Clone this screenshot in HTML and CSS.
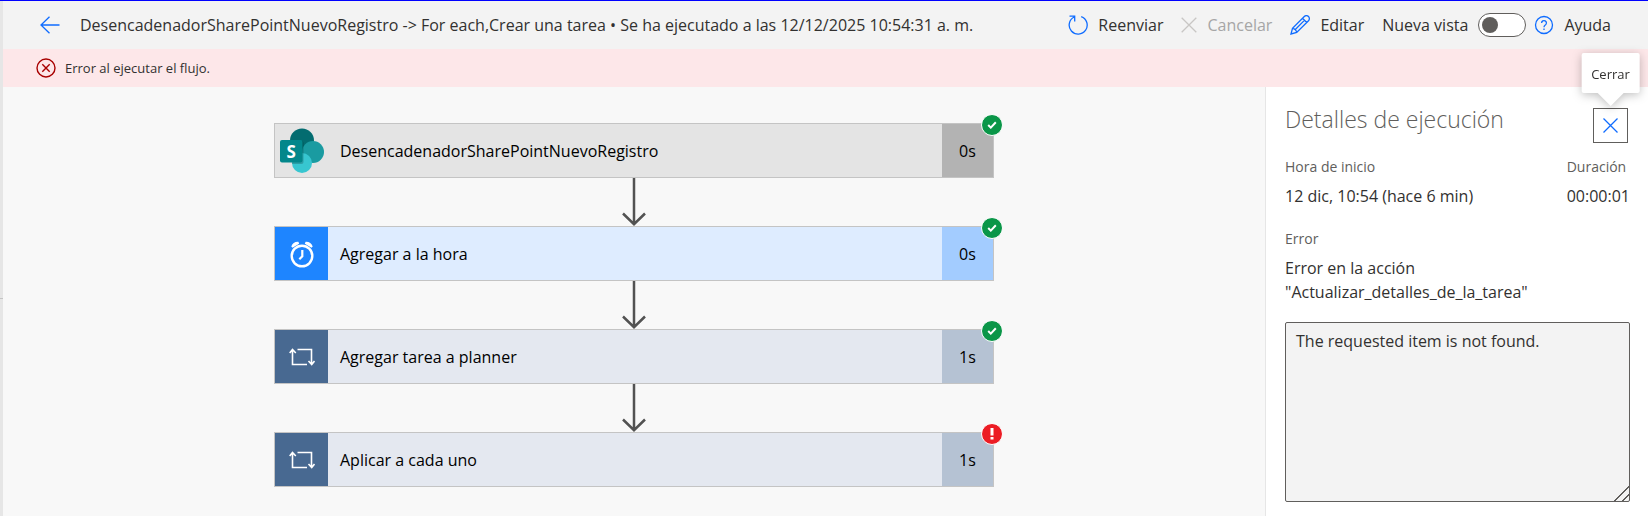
FILE: index.html
```html
<!DOCTYPE html>
<html lang="es">
<head>
    <meta charset="utf-8">
    <title>Historial de ejecución</title>
    <link rel="stylesheet" href="styles.css">
</head>
<body>
    <div class="rail"><span class="rail-mark"></span></div>

    <div class="page">
        <header class="topbar">
            <button class="icon-btn back" aria-label="Atrás">
                <svg width="20" height="18" viewBox="0 0 20 18"><path d="M19.500 9H1M9.500 .7L1 9l8.500 8.300"/></svg>
            </button>
            <h1 class="run-title">DesencadenadorSharePointNuevoRegistro -&gt; For each,Crear una tarea • Se ha ejecutado a las 12/12/2025 10:54:31 a. m.</h1>

            <div class="commands">
                <button class="command">
                    <svg width="20" height="20" viewBox="0 0 20 20"><path d="M13.200 1.600A9 9 0 1 1 6.200 2M1.500 1.200h5.200v5.300"/></svg>
                    Reenviar
                </button>
                <button class="command" disabled>
                    <svg width="16" height="16" viewBox="0 0 16 16"><path d="M.7 .7l14.600 14.600M15.300 .7L.7 15.300"/></svg>
                    Cancelar
                </button>
                <button class="command">
                    <svg width="20" height="20" viewBox="0 0 20 20"><path d="M1 19l1.500-5.700L14.300 1.500a2.900 2.900 0 0 1 4.200 4.200L6.700 17.500zM12.500 3.300l4.200 4.200M2.500 13.300c2.200.3 3.900 2 4.200 4.200M14.400 5.400L4.800 15"/></svg>
                    Editar
                </button>
                <label class="toggle">
                    Nueva vista
                    <input type="checkbox" role="switch">
                </label>
                <button class="command help">
                    <svg width="20" height="20" viewBox="0 0 20 20"><circle cx="10" cy="10" r="8.500"/><path d="M7.600 8a2.400 2.400 0 1 1 3.700 2c-.9.600-1.300 1.100-1.300 2.200M10 13.500v1.500"/></svg>
                    Ayuda
                </button>
            </div>
        </header>

        <div class="banner" role="alert">
            <svg width="20" height="20" viewBox="0 0 20 20"><circle cx="10" cy="10" r="9"/><path d="M6.300 6.300l7.400 7.400M13.700 6.300l-7.400 7.400"/></svg>
            Error al ejecutar el flujo.
        </div>

        <div class="content">
            <main class="canvas">
                <div class="card trigger">
                    <div class="card-icon">
                        <svg width="46" height="46" viewBox="0 0 46 46">
                            <circle cx="23" cy="12.500" r="12" fill="#036c70"/>
                            <circle cx="34" cy="24" r="11" fill="#1a9ba1"/>
                            <circle cx="23" cy="35" r="10" fill="#37c6d0"/>
                            <path d="M11 13h11.500a2 2 0 0 1 2 2v19a2 2 0 0 1-2 2H13z" fill="#000" opacity=".2"/>
                            <rect x="1" y="12" width="22.500" height="22.500" rx="2" fill="#03878b"/>
                            <text class="logo-letter" x="12.200" y="29.500">S</text>
                        </svg>
                    </div>
                    <div class="card-name">DesencadenadorSharePointNuevoRegistro</div>
                    <div class="card-time">0s</div>
                    <span class="badge ok"><svg width="10" height="8" viewBox="0 0 10 8"><path d="M1.200 4l2.600 2.600L8.800 1.300"/></svg></span>
                </div>

                <svg class="connector" width="26" height="48" viewBox="0 0 26 48"><path d="M13 0v46M2 35.500L13 46.200l11-10.700"/></svg>

                <div class="card time">
                    <div class="card-icon">
                        <svg width="28" height="30" viewBox="0 0 28 30">
                            <circle cx="14" cy="17" r="10.300" fill="none" stroke="#fff" stroke-width="2.400"/>
                            <path d="M14.300 11v6.200l-3 3" fill="none" stroke="#fff" stroke-width="2.200"/>
                            <path d="M3.300 7.400C4.300 4.300 7 2.400 10.400 2.700l.8 2L4.500 8.800zM24.700 7.400c-1-3.100-3.700-5-7.100-4.700l-.8 2 6.700 4.100z" fill="#fff"/>
                        </svg>
                    </div>
                    <div class="card-name">Agregar a la hora</div>
                    <div class="card-time">0s</div>
                    <span class="badge ok"><svg width="10" height="8" viewBox="0 0 10 8"><path d="M1.200 4l2.600 2.600L8.800 1.300"/></svg></span>
                </div>

                <svg class="connector" width="26" height="48" viewBox="0 0 26 48"><path d="M13 0v46M2 35.500L13 46.200l11-10.700"/></svg>

                <div class="card loop">
                    <div class="card-icon">
                        <svg width="26" height="18" viewBox="0 0 26 18"><path d="M18 16.500H3.500V1.500M.7 5l2.800-3.500L6.800 5M8.500 1.500h14v15M19.500 13l3.200 3.500L25.500 13"/></svg>
                    </div>
                    <div class="card-name">Agregar tarea a planner</div>
                    <div class="card-time">1s</div>
                    <span class="badge ok"><svg width="10" height="8" viewBox="0 0 10 8"><path d="M1.200 4l2.600 2.600L8.800 1.300"/></svg></span>
                </div>

                <svg class="connector" width="26" height="48" viewBox="0 0 26 48"><path d="M13 0v46M2 35.500L13 46.200l11-10.700"/></svg>

                <div class="card loop">
                    <div class="card-icon">
                        <svg width="26" height="18" viewBox="0 0 26 18"><path d="M18 16.500H3.500V1.500M.7 5l2.800-3.500L6.800 5M8.500 1.500h14v15M19.500 13l3.200 3.500L25.500 13"/></svg>
                    </div>
                    <div class="card-name">Aplicar a cada uno</div>
                    <div class="card-time">1s</div>
                    <span class="badge failed"><svg width="4" height="12" viewBox="0 0 4 12"><path d="M2 0v7.500M2 9v2.500"/></svg></span>
                </div>
            </main>

            <aside class="details">
                <div class="details-head">
                    <h2>Detalles de ejecución</h2>
                    <button class="close-btn" aria-label="Cerrar">
                        <svg width="15" height="15" viewBox="0 0 15 15"><path d="M.5 .5l14 14M14.500 .5l-14 14"/></svg>
                        <span class="tooltip">Cerrar</span>
                    </button>
                </div>
                <div class="details-row">
                    <div class="field">
                        <div class="field-label">Hora de inicio</div>
                        <div class="field-value">12 dic, 10:54 (hace 6 min)</div>
                    </div>
                    <div class="field">
                        <div class="field-label">Duración</div>
                        <div class="field-value">00:00:01</div>
                    </div>
                </div>
                <div class="field">
                    <label class="field-label" for="errorText">Error</label>
                    <div class="field-value">Error en la acción "Actualizar_detalles_de_la_tarea"</div>
                </div>
                <textarea id="errorText" class="error-text" readonly>The requested item is not found.</textarea>
            </aside>
        </div>
    </div>
</body>
</html>
```

FILE: styles.css
```css
* {
    box-sizing: border-box;
}

body {
    margin: 0;
    min-height: 100vh;
    display: flex;
    border-top: 1px solid #0000ff;
    background-color: #f8f8f8;
    color: #323130;
    font-family: "Open Sans", "Noto Sans", sans-serif;
    font-size: 16px;
    line-height: 24px;
}

button {
    padding: 0;
    border: none;
    background: none;
    color: inherit;
    font: inherit;
    cursor: pointer;
}

svg {
    flex: none;
    display: block;
}

.rail {
    width: 3px;
    display: flex;
    align-items: center;
    background-color: #e6e6e6;
}

.rail-mark {
    width: 3px;
    height: 1px;
    margin-top: 80px;
    background-color: #c4c4c4;
}

.page {
    flex: 1;
    display: flex;
    flex-direction: column;
}

/* top bar */
.topbar {
    display: flex;
    align-items: center;
    height: 48px;
    padding: 0 37px;
    background-color: #f3f3f3;
}

.icon-btn svg,
.command svg,
.close-btn svg {
    fill: none;
    stroke: #0f6cff;
    stroke-width: 1.3;
}

.run-title {
    margin: 0 0 0 20px;
    font-size: 16px;
    font-weight: 400;
    white-space: nowrap;
}

.commands {
    display: flex;
    align-items: center;
    gap: 18px;
    margin-left: auto;
}

.command {
    display: flex;
    align-items: center;
    gap: 10px;
}

.command:disabled {
    color: #a6a6a6;
    cursor: default;
}

.command:disabled svg {
    stroke: #c8c6c4;
}

.command.help {
    margin-left: -10px;
}

.toggle {
    display: flex;
    align-items: center;
    gap: 10px;
}

.toggle input {
    appearance: none;
    display: flex;
    align-items: center;
    width: 48px;
    height: 24px;
    margin: 0;
    padding: 0 3px;
    border: 1px solid #605e5c;
    border-radius: 12px;
    background-color: #fff;
}

.toggle input::before {
    content: "";
    width: 16px;
    height: 16px;
    border-radius: 50%;
    background-color: #605e5c;
}

.toggle input:checked::before {
    margin-left: auto;
}

/* error banner */
.banner {
    display: flex;
    align-items: center;
    gap: 9px;
    height: 38px;
    padding: 0 33px;
    background-color: #fde7e9;
    font-size: 13px;
}

.banner svg {
    fill: none;
    stroke: #a80000;
    stroke-width: 1.4;
}

.content {
    flex: 1;
    display: flex;
}

/* flow */
.canvas {
    flex: 1;
    display: flex;
    flex-direction: column;
    align-items: center;
    padding: 36px 20px 24px;
}

.card {
    position: relative;
    display: flex;
    width: 100%;
    max-width: 720px;
    height: 55px;
    border: 1px solid #c4c4c4;
    color: #000;
}

.card-icon {
    width: 53px;
    display: flex;
    align-items: center;
    justify-content: center;
}

.card-name {
    flex: 1;
    display: flex;
    align-items: center;
    padding-left: 12px;
}

.card-time {
    width: 51px;
    display: flex;
    align-items: center;
    justify-content: center;
}

.trigger {
    background-color: #e4e4e4;
}

.trigger .card-time {
    background-color: #b3b3b3;
}

.time {
    background-color: #deecff;
}

.time .card-icon {
    background-color: #1e85ff;
}

.time .card-time {
    background-color: #a3ccff;
}

.loop {
    background-color: #e4e8f0;
}

.loop .card-icon {
    background-color: #486991;
}

.loop .card-icon svg {
    fill: none;
    stroke: #fff;
    stroke-width: 1.6;
}

.loop .card-time {
    background-color: #b5c2d3;
}

.logo-letter {
    fill: #fff;
    font-size: 17px;
    font-weight: 700;
    text-anchor: middle;
}

.badge {
    position: absolute;
    top: -10px;
    right: -10px;
    display: flex;
    align-items: center;
    justify-content: center;
    width: 22px;
    height: 22px;
    border: 1px solid #fff;
    border-radius: 50%;
}

.badge svg {
    fill: none;
    stroke: #fff;
    stroke-width: 2;
}

.badge.ok {
    background-color: #0a9648;
}

.badge.failed {
    background-color: #ec1c24;
}

.badge.failed svg {
    stroke-width: 3;
}

.connector {
    fill: none;
    stroke: #525252;
    stroke-width: 2.5;
}

/* details panel */
.details {
    width: 383px;
    padding: 13px 18px 13px 19px;
    border-left: 1px solid #e6e6e6;
    background-color: #fff;
}

.details-head {
    display: flex;
    justify-content: space-between;
    min-height: 43px;
    padding-right: 2px;
    margin-bottom: 14px;
}

.details h2 {
    margin: 0;
    color: #605e5c;
    font-size: 23px;
    font-weight: 300;
    line-height: 38px;
}

.close-btn {
    position: relative;
    align-self: flex-end;
    display: flex;
    align-items: center;
    justify-content: center;
    width: 35px;
    height: 35px;
    border: 1px solid #605e5c;
}

.tooltip {
    position: absolute;
    bottom: 49px;
    left: 50%;
    transform: translateX(-50%);
    padding: 9px 10px 7px;
    border-radius: 2px;
    background-color: #fff;
    filter: drop-shadow(0 2px 5px rgba(0, 0, 0, 0.25));
    font-size: 13px;
}

.tooltip::after {
    content: "";
    position: absolute;
    top: 100%;
    left: 50%;
    margin-left: -13px;
    border: 13px solid transparent;
    border-top-color: #fff;
    border-bottom: none;
}

.details-row {
    display: flex;
    justify-content: space-between;
    margin-bottom: 21px;
}

.field-label {
    display: block;
    margin-bottom: 7px;
    color: #605e5c;
    font-size: 14px;
    line-height: 20px;
}

.error-text {
    display: block;
    width: 100%;
    height: 180px;
    margin-top: 18px;
    padding: 6px 10px;
    border: 1px solid #605e5c;
    border-radius: 2px;
    background-color: #f3f3f3;
    color: #323130;
    font: inherit;
    resize: both;
}

.error-text::-webkit-resizer {
    background: linear-gradient(135deg, transparent 48%, #605e5c 48%, #605e5c 55%, transparent 55%, transparent 75%, #605e5c 75%, #605e5c 82%, transparent 82%);
}
```
